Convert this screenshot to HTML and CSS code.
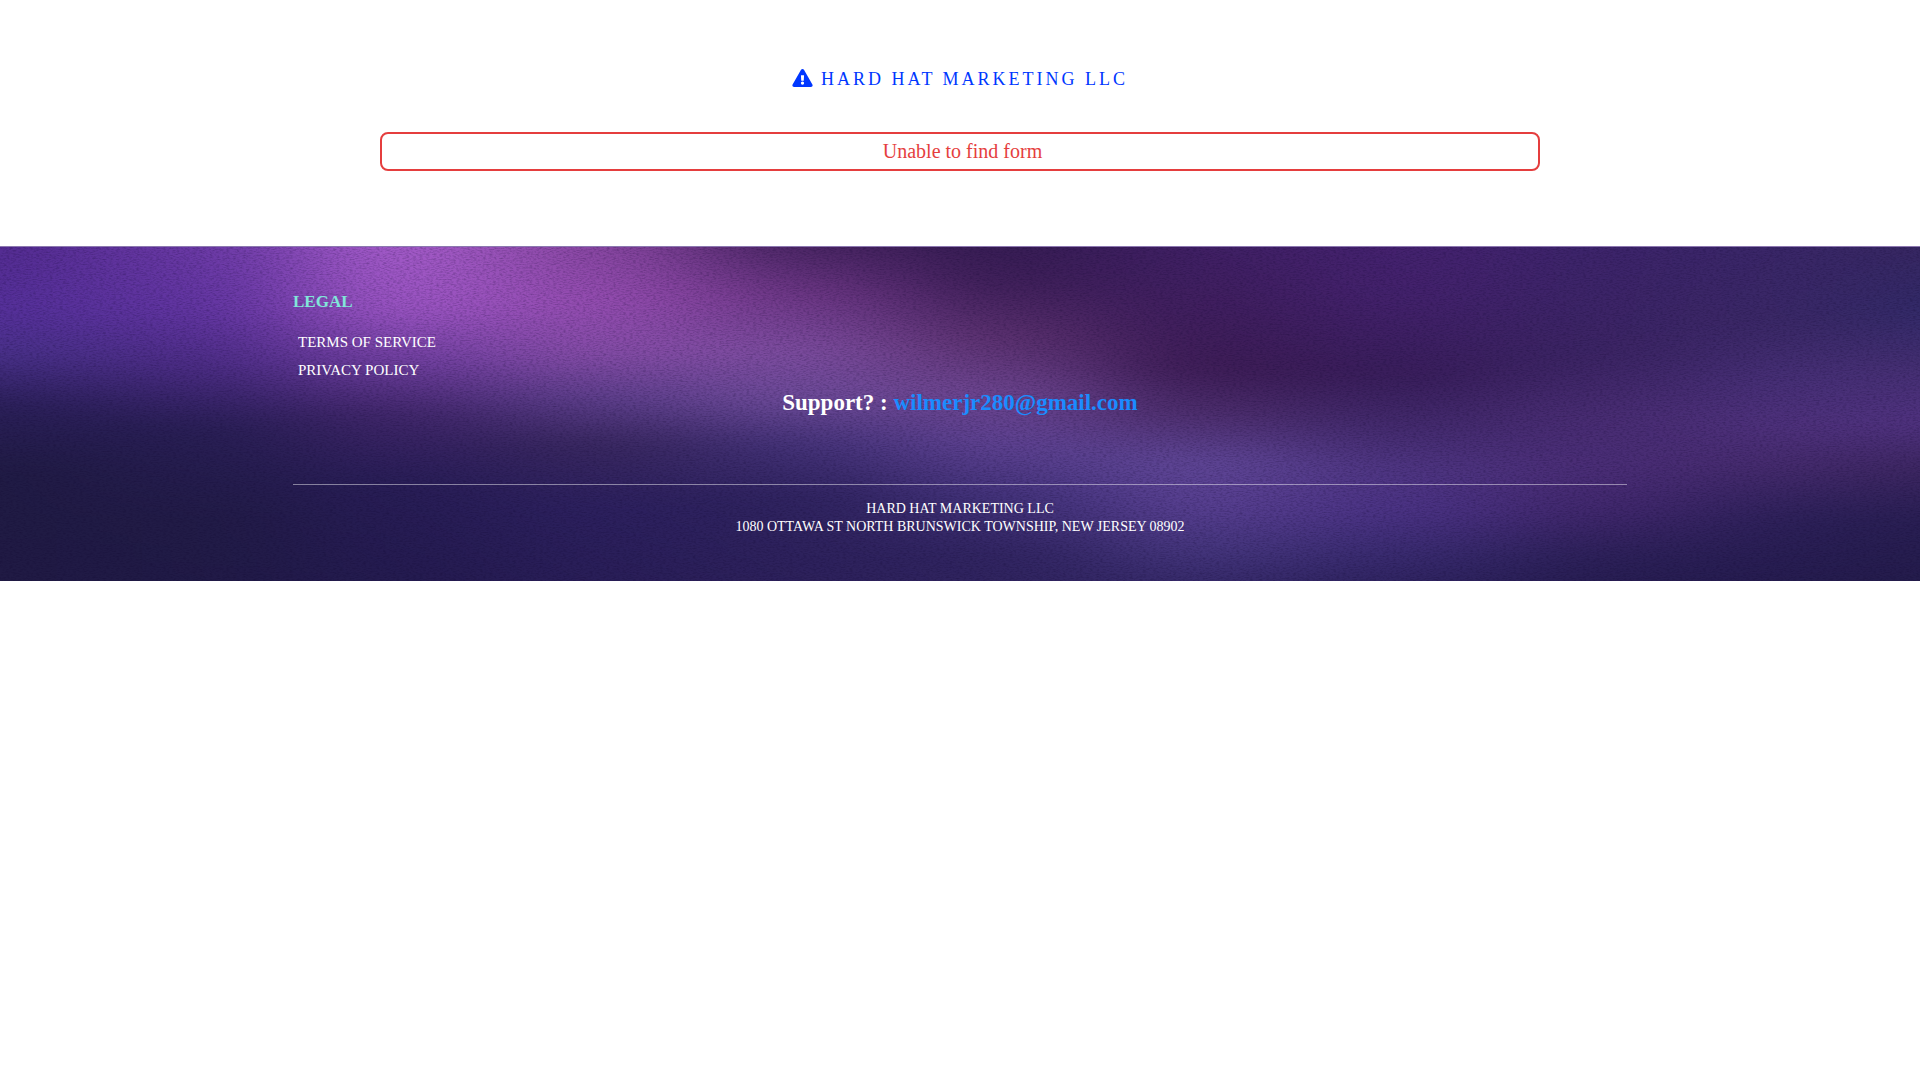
FILE: index.html
```html
<!doctype html>
<html lang="en">
<head>
<meta charset="utf-8">
<title>HARD HAT MARKETING LLC</title>
<link rel="stylesheet" href="styles.css">
</head>

<body>
<main class="main">
	<h1 class="brand">
		<svg class="brand-icon" viewBox="0 0 576 512" aria-hidden="true"><path fill="currentColor" d="M569.500 440C588 472 564.800 512 527.900 512H48.100C11.100 512-12 471.900 6.500 440L246.400 24C264.900-8 311.200-8 329.600 24zM288 354a46 46 0 1 0 0 92 46 46 0 0 0 0-92zM244.300 188.700l7.400 136c.4 6.400 5.600 11.300 12 11.300h48.500c6.400 0 11.600-5 12-11.300l7.400-136c.4-6.900-5.100-12.700-12-12.700h-63.400c-6.900 0-12.300 5.800-11.900 12.700z"/></svg>
		<span>HARD HAT MARKETING LLC</span>
	</h1>
	<div class="error" role="alert">Unable to find form</div>
</main>

<footer class="footer">
	<svg class="footer-bg" viewBox="0 0 1920 335" preserveAspectRatio="none" aria-hidden="true">
		<defs>
			<linearGradient id="g0" x2="0" y2="1"><stop offset="0" stop-color="#522a8e"/><stop offset=".22" stop-color="#55309a"/><stop offset=".34" stop-color="#483088"/><stop offset=".48" stop-color="#2a1f58"/><stop offset=".65" stop-color="#201b44"/><stop offset="1" stop-color="#201a44"/></linearGradient>
			<linearGradient id="g1" x2="0" y2="1"><stop offset="0" stop-color="#6c3aa6"/><stop offset=".22" stop-color="#6034a0"/><stop offset=".36" stop-color="#4c2c86"/><stop offset=".54" stop-color="#281e54"/><stop offset=".78" stop-color="#211b46"/><stop offset="1" stop-color="#201a46"/></linearGradient>
			<linearGradient id="g2" x2="0" y2="1"><stop offset="0" stop-color="#a85ecc"/><stop offset=".22" stop-color="#9a54c2"/><stop offset=".36" stop-color="#6e3e9e"/><stop offset=".5" stop-color="#40266a"/><stop offset=".68" stop-color="#281d56"/><stop offset="1" stop-color="#231a4e"/></linearGradient>
			<linearGradient id="g3" x2="0" y2="1"><stop offset="0" stop-color="#84449c"/><stop offset=".2" stop-color="#944cb0"/><stop offset=".34" stop-color="#844ca6"/><stop offset=".46" stop-color="#5c3e8a"/><stop offset=".58" stop-color="#38275f"/><stop offset=".75" stop-color="#2c205e"/><stop offset="1" stop-color="#281d56"/></linearGradient>
			<linearGradient id="g4" x2="0" y2="1"><stop offset="0" stop-color="#3c1e56"/><stop offset=".18" stop-color="#6c3684"/><stop offset=".33" stop-color="#7c4c9e"/><stop offset=".46" stop-color="#6c4a98"/><stop offset=".58" stop-color="#443278"/><stop offset=".72" stop-color="#2f235f"/><stop offset="1" stop-color="#2c205a"/></linearGradient>
			<linearGradient id="g5" x2="0" y2="1"><stop offset="0" stop-color="#321a50"/><stop offset=".15" stop-color="#3e1f58"/><stop offset=".3" stop-color="#5a306e"/><stop offset=".44" stop-color="#6c448e"/><stop offset=".58" stop-color="#5e4292"/><stop offset=".72" stop-color="#42327a"/><stop offset=".88" stop-color="#302460"/><stop offset="1" stop-color="#2f235e"/></linearGradient>
			<linearGradient id="g6" x2="0" y2="1"><stop offset="0" stop-color="#402066"/><stop offset=".2" stop-color="#3f1e5e"/><stop offset=".38" stop-color="#3d1c55"/><stop offset=".5" stop-color="#4c2d6c"/><stop offset=".63" stop-color="#5f4696"/><stop offset=".75" stop-color="#573f90"/><stop offset=".87" stop-color="#44357c"/><stop offset="1" stop-color="#2f2460"/></linearGradient>
			<linearGradient id="g7" x2="0" y2="1"><stop offset="0" stop-color="#452270"/><stop offset=".18" stop-color="#43216c"/><stop offset=".4" stop-color="#381d5a"/><stop offset=".52" stop-color="#41286a"/><stop offset=".65" stop-color="#4e3582"/><stop offset=".76" stop-color="#4a3284"/><stop offset=".88" stop-color="#382a6e"/><stop offset="1" stop-color="#291f58"/></linearGradient>
			<linearGradient id="g8" x2="0" y2="1"><stop offset="0" stop-color="#3d246c"/><stop offset=".35" stop-color="#3b2463"/><stop offset=".5" stop-color="#482c72"/><stop offset=".64" stop-color="#4a2d76"/><stop offset=".76" stop-color="#40276c"/><stop offset=".88" stop-color="#2c2058"/><stop offset="1" stop-color="#241b4e"/></linearGradient>
			<linearGradient id="g9" x2="0" y2="1"><stop offset="0" stop-color="#392668"/><stop offset=".26" stop-color="#3a2866"/><stop offset=".4" stop-color="#462f76"/><stop offset=".53" stop-color="#4e317c"/><stop offset=".64" stop-color="#442a6c"/><stop offset=".78" stop-color="#2c2058"/><stop offset="1" stop-color="#231a4c"/></linearGradient>
			<linearGradient id="g10" x2="0" y2="1"><stop offset="0" stop-color="#38265e"/><stop offset=".22" stop-color="#302a68"/><stop offset=".38" stop-color="#452f72"/><stop offset=".52" stop-color="#503280"/><stop offset=".64" stop-color="#3c2660"/><stop offset=".78" stop-color="#281e52"/><stop offset="1" stop-color="#221b48"/></linearGradient>
			<filter id="soft" filterUnits="userSpaceOnUse" x="-300" y="-40" width="2520" height="415" color-interpolation-filters="sRGB">
				<feGaussianBlur stdDeviation="65 8"/>
			</filter>
			<filter id="grain" x="0" y="0" width="100%" height="100%" color-interpolation-filters="sRGB">
				<feTurbulence type="fractalNoise" baseFrequency=".3 .8" numOctaves="2" seed="4"/>
				<feColorMatrix values="0 0 0 0 .04  0 0 0 0 0  0 0 0 0 .16  .5 0 0 0 -.2"/>
			</filter>
		</defs>
		<g filter="url(#soft)">
			<rect x="-300" y="-20" width="400" height="375" fill="url(#g0)"/>
			<rect x="100" y="-20" width="200" height="375" fill="url(#g1)"/>
			<rect x="300" y="-20" width="200" height="375" fill="url(#g2)"/>
			<rect x="500" y="-20" width="200" height="375" fill="url(#g3)"/>
			<rect x="700" y="-20" width="200" height="375" fill="url(#g4)"/>
			<rect x="900" y="-20" width="200" height="375" fill="url(#g5)"/>
			<rect x="1100" y="-20" width="200" height="375" fill="url(#g6)"/>
			<rect x="1300" y="-20" width="200" height="375" fill="url(#g7)"/>
			<rect x="1500" y="-20" width="200" height="375" fill="url(#g8)"/>
			<rect x="1700" y="-20" width="170" height="375" fill="url(#g9)"/>
			<rect x="1870" y="-20" width="350" height="375" fill="url(#g10)"/>
		</g>
		<rect width="1920" height="335" filter="url(#grain)"/>
	</svg>

	<div class="footer-content">
		<h2 class="legal-title">LEGAL</h2>
		<ul class="legal-links">
			<li><a href="#">TERMS OF SERVICE</a></li>
			<li><a href="#">PRIVACY POLICY</a></li>
		</ul>
		<p class="support">Support? : <a href="mailto:wilmerjr280@gmail.com">wilmerjr280@gmail.com</a></p>
		<address class="company">
			HARD HAT MARKETING LLC<br>
			1080 OTTAWA ST NORTH BRUNSWICK TOWNSHIP, NEW JERSEY 08902
		</address>
	</div>
</footer>
</body>
</html>
```

FILE: styles.css
```css
*{margin:0; padding:0; box-sizing:border-box;}
body{
	background:#fff;
	font-family:"Liberation Serif", "Times New Roman", serif;
}
a{text-decoration:none;}

.main{
	max-width:1160px;
	margin:0 auto;
	padding:64px 0 75px;
}
.brand{
	display:flex; justify-content:center; align-items:center;
	gap:8px; margin-bottom:38px;
	font-size:18px; font-weight:400; line-height:30px;
	letter-spacing:3px; color:#0037ff;
}
.brand-icon{width:21px; height:18px; margin-bottom:2px;}
.error{
	padding:4px 0 4px 5px;
	border:2px solid #e53e3e; border-radius:8px;
	font-size:20px; line-height:27px;
	text-align:center; color:#e53e3e;
}

.footer{
	position:relative; overflow:hidden;
	background:#2c205a; color:#fff;
	border-top:1px solid #8c78b0;
}
.footer-bg{
	position:absolute; left:0; top:0;
	width:100%; height:100%;
}
.footer-content{
	position:relative;
	max-width:1334px;
	margin:0 auto; padding:42px 0 45px;
}
.legal-title{
	margin-bottom:13px;
	font-size:17px; line-height:26px; color:#81e6d9;
}
.legal-links{list-style:none; padding-left:5px;}
.legal-links a{
	font-size:15px; line-height:28px; color:#fff;
}
.support{
	margin-bottom:62px;
	font-size:23px; font-weight:700; line-height:38px;
	text-align:center;
}
.support a{color:#1a8cff;}
.company{
	padding-top:15px;
	border-top:1px solid rgba(255,255,255,.45);
	font-size:14px; font-style:normal; line-height:18px;
	text-align:center;
}
```
